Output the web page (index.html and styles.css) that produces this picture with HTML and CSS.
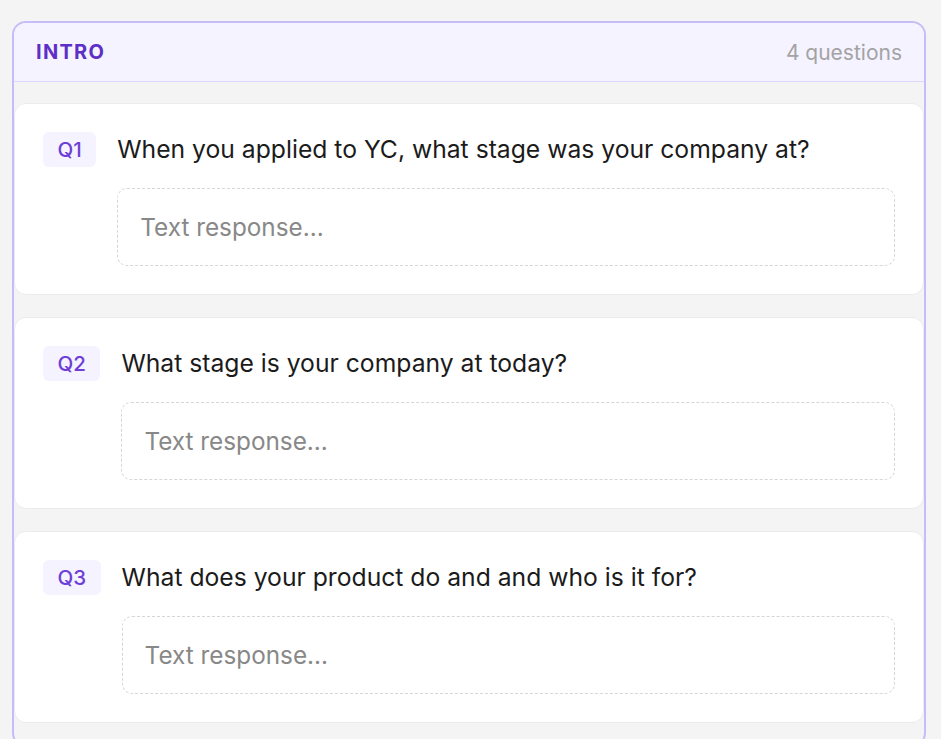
FILE: index.html
```html
<!DOCTYPE html>
<html lang="en">
<head>
<meta charset="utf-8">
<title>Intro</title>
<link rel="stylesheet" href="styles.css">
</head>
<body>
<section class="section">
  <header class="section-head">
    <span class="section-title">INTRO</span>
    <span class="section-count">4 questions</span>
  </header>
  <div class="section-body">
    <div class="card">
      <span class="badge">Q1</span>
      <div class="q-main">
        <div class="q-text">When you applied to YC, what stage was your company at?</div>
        <div class="response">Text response...</div>
      </div>
    </div>
    <div class="card">
      <span class="badge">Q2</span>
      <div class="q-main">
        <div class="q-text">What stage is your company at today?</div>
        <div class="response">Text response...</div>
      </div>
    </div>
    <div class="card">
      <span class="badge">Q3</span>
      <div class="q-main">
        <div class="q-text">What does your product do and and who is it for?</div>
        <div class="response">Text response...</div>
      </div>
    </div>
  </div>
</section>
</body>
</html>
```
FILE: styles.css
```css
html, body {
  margin: 0;
  padding: 0;
  background: #f4f4f4;
  font-family: "Inter", "Noto Sans", sans-serif;
}
body {
  padding: 21px 15px 0 12px;
}
.section {
  border: 2px solid #c7bcf8;
  border-radius: 14px;
  overflow: hidden;
  background: #f4f4f4;
}
.section-head {
  display: flex;
  justify-content: space-between;
  align-items: center;
  height: 58px;
  padding: 0 22px;
  background: #f5f3ff;
  border-bottom: 1px solid #ddd6fb;
}
.section-title {
  font-size: 20px;
  font-weight: 700;
  letter-spacing: 1.3px;
  color: #5d2fc6;
}
.section-count {
  font-size: 21px;
  color: #a3a3a3;
}
.section-body {
  display: flex;
  flex-direction: column;
  gap: 22px;
  padding: 21px 0 22px;
}
.card {
  display: flex;
  align-items: flex-start;
  gap: 21px;
  background: #fff;
  border: 1px solid #ebebeb;
  border-radius: 12px;
  padding: 28px;
}
.badge {
  flex: none;
  display: flex;
  align-items: center;
  height: 35px;
  padding: 0 14.5px;
  background: #f5f3ff;
  border-radius: 6px;
  color: #6d3fd6;
  font-size: 20.5px;
  font-weight: 500;
}
.q-main {
  flex: 1;
  display: flex;
  flex-direction: column;
  gap: 21px;
}
.q-text {
  font-size: 24.7px;
  line-height: 35px;
  color: #1b1b1b;
}
.response {
  height: 76px;
  display: flex;
  align-items: center;
  padding: 0 22px;
  border: 1px dashed #d6d6d6;
  border-radius: 10px;
  font-size: 24.3px;
  color: #888888;
}
```
